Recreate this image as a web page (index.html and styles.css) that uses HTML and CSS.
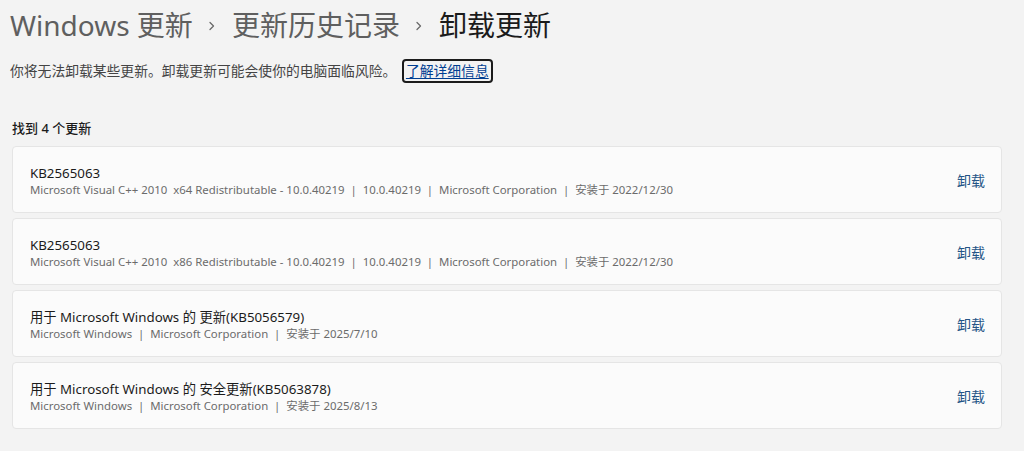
FILE: index.html
```html
<!DOCTYPE html>
<html lang="zh-CN">
<head>
<meta charset="utf-8">
<title>卸载更新</title>
<link rel="stylesheet" href="styles.css">
</head>
<body>
<div class="page">
  <h1 class="crumbs">
    <span class="crumb">Windows 更新</span>
    <span class="chev"><svg width="10" height="14" viewBox="0 0 10 14"><path d="M3 3.5 L6.5 7 L3 10.5" fill="none" stroke="#6a6a6a" stroke-width="1.3" stroke-linecap="round" stroke-linejoin="round"/></svg></span>
    <span class="crumb">更新历史记录</span>
    <span class="chev"><svg width="10" height="14" viewBox="0 0 10 14"><path d="M3 3.5 L6.5 7 L3 10.5" fill="none" stroke="#6a6a6a" stroke-width="1.3" stroke-linecap="round" stroke-linejoin="round"/></svg></span>
    <span class="crumb current">卸载更新</span>
  </h1>
  <p class="warn">你将无法卸载某些更新。卸载更新可能会使你的电脑面临风险。 <a class="more" href="#">了解详细信息</a></p>
  <div class="count">找到 4 个更新</div>
  <ul class="list">
    <li class="card">
      <div class="info">
        <div class="name">KB2565063</div>
        <div class="meta">Microsoft Visual C++ 2010&nbsp; x64 Redistributable - 10.0.40219 &nbsp;|&nbsp; 10.0.40219 &nbsp;|&nbsp; Microsoft Corporation &nbsp;|&nbsp; 安装于 2022/12/30</div>
      </div>
      <a class="uninstall" href="#">卸载</a>
    </li>
    <li class="card">
      <div class="info">
        <div class="name">KB2565063</div>
        <div class="meta">Microsoft Visual C++ 2010&nbsp; x86 Redistributable - 10.0.40219 &nbsp;|&nbsp; 10.0.40219 &nbsp;|&nbsp; Microsoft Corporation &nbsp;|&nbsp; 安装于 2022/12/30</div>
      </div>
      <a class="uninstall" href="#">卸载</a>
    </li>
    <li class="card">
      <div class="info">
        <div class="name">用于 Microsoft Windows 的 更新(KB5056579)</div>
        <div class="meta">Microsoft Windows &nbsp;|&nbsp; Microsoft Corporation &nbsp;|&nbsp; 安装于 2025/7/10</div>
      </div>
      <a class="uninstall" href="#">卸载</a>
    </li>
    <li class="card">
      <div class="info">
        <div class="name">用于 Microsoft Windows 的 安全更新(KB5063878)</div>
        <div class="meta">Microsoft Windows &nbsp;|&nbsp; Microsoft Corporation &nbsp;|&nbsp; 安装于 2025/8/13</div>
      </div>
      <a class="uninstall" href="#">卸载</a>
    </li>
  </ul>
</div>
</body>
</html>
```
FILE: styles.css
```css
* { box-sizing: border-box; }
html, body { margin: 0; padding: 0; }
body {
  background: #f3f3f3;
  font-family: "Noto Sans", "Noto Sans CJK SC", sans-serif;
  color: #1b1b1b;
  width: 1024px;
  height: 451px;
  overflow: hidden;
}
.page { padding: 0 22px 0 12px; }
.crumbs {
  margin: 0;
  padding: 6px 0 0 0;
  margin-left: -2px;
  display: flex;
  align-items: center;
  font-size: 28px;
  font-weight: 400;
  line-height: 38px;
  color: #5f5f5f;
}
.crumb.current { color: #1b1b1b; }
.chev {
  display: flex;
  align-items: center;
  margin: 2px 15px 0 14px;
}
.warn {
  margin: 15px 0 0 -2px;
  font-size: 13.8px;
  line-height: 24px;
  color: #444444;
}
.more {
  display: inline-block;
  color: #003e92;
  text-decoration: underline;
  text-underline-offset: 2px;
  border: 2px solid #1b1b1b;
  border-radius: 4px;
  padding: 0 2px;
  line-height: 20px;
  margin-left: 2px;
}
.count {
  margin-top: 35px;
  font-size: 13px;
  font-weight: 500;
  line-height: 20px;
  color: #1b1b1b;
}
.list {
  list-style: none;
  margin: 8px 0 0 0;
  padding: 0;
  display: flex;
  flex-direction: column;
  gap: 5px;
}
.card {
  height: 67px;
  background: #fbfbfb;
  border: 1px solid #e5e5e5;
  border-radius: 4px;
  display: flex;
  align-items: center;
  justify-content: space-between;
  padding: 0 16px 2px 17px;
}
.info { margin-top: 6px; }
.name {
  font-size: 13.3px;
  line-height: 17px;
  color: #1b1b1b;
}
.meta {
  font-size: 11.4px;
  line-height: 16px;
  color: #6b6b6b;
}
.uninstall {
  font-size: 14px;
  color: #245486;
  text-decoration: none;
  margin-top: 2px;
}
```
